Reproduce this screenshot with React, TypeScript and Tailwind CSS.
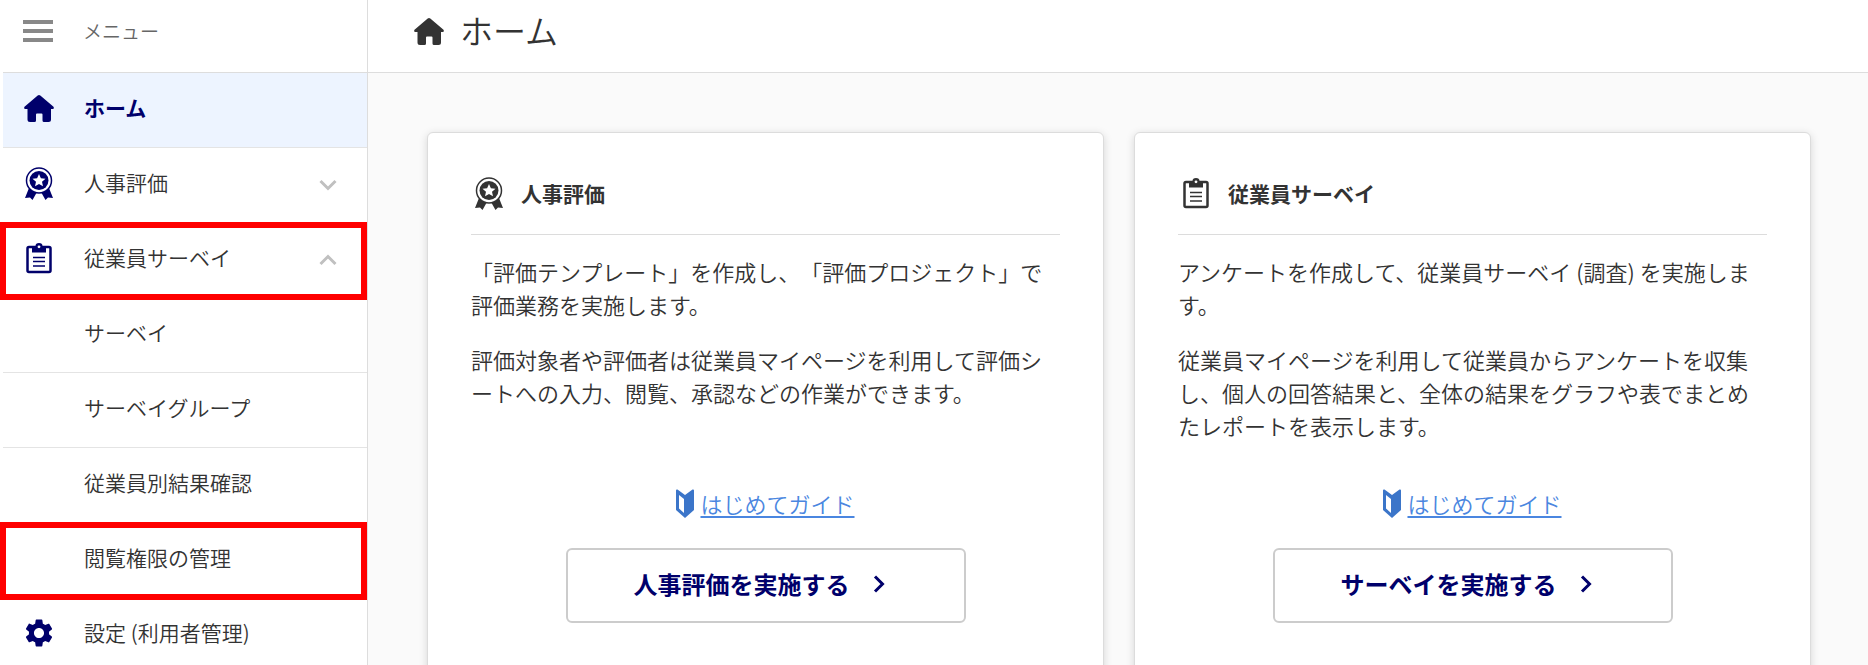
import { ReactNode } from "react";

type IconProps = { className?: string };

function HomeIcon({ className }: IconProps) {
    return (
        <svg viewBox="0 0 30 27" className={className} fill="currentColor" aria-hidden="true">
            <path d="M16.3 .6 L29.5 11.8 Q30.6 13.8 28.6 14 H27 V24.5 Q27 27 24.5 27 H20 Q18.5 27 18.5 25.5 V19.5 Q18.5 18.5 17.5 18.5 H13 Q12 18.5 12 19.5 V25.5 Q12 27 10.5 27 H6 Q3.5 27 3.5 24.5 V14 H1.4 Q-.6 13.8 .5 11.8 L13.7 .6 Q15 -.4 16.3 .6 Z" />
        </svg>
    );
}

function AwardIcon({ className }: IconProps) {
    return (
        <svg viewBox="0 0 28 33" className={className} fill="currentColor" aria-hidden="true">
            <path d="M4 21 L0 31 L5 30.5 L7.5 33 L12 25 Z M24 21 L28 31 L23 30.5 L20.5 33 L16 25 Z" />
            <circle cx="14" cy="13.5" r="12.5" fill="white" stroke="currentColor" strokeWidth="1.5" />
            <circle cx="14" cy="13.5" r="9.5" />
            <path
                d="M14 7 L15.9 11.2 L20.5 11.7 L17 14.7 L18 19.2 L14 16.9 L10 19.2 L11 14.7 L7.5 11.7 L12.1 11.2 Z"
                fill="white"
            />
        </svg>
    );
}

function ClipboardIcon({ className }: IconProps) {
    return (
        <svg viewBox="0 0 26 31" className={className} fill="none" stroke="currentColor" aria-hidden="true">
            <rect x="1.5" y="4" width="23" height="25" rx="1.5" strokeWidth="2.5" />
            <path d="M6 3 H9.5 A3.5 3 0 0 1 16.5 3 H20 V9.5 H6 Z" fill="currentColor" stroke="none" />
            <circle cx="13" cy="3.8" r="1.4" fill="white" stroke="none" />
            <path d="M7 14.5 H19 M7 18.5 H19 M7 23 H19" strokeWidth="1.5" />
        </svg>
    );
}

function GearIcon({ className }: IconProps) {
    return (
        <svg viewBox="2 2 20 20" className={className} fill="currentColor" aria-hidden="true">
            <path d="M19.14 12.94c.04-.3.06-.61.06-.94 0-.32-.02-.64-.07-.94l2.03-1.58c.18-.14.23-.41.12-.61l-1.92-3.32c-.12-.22-.37-.29-.59-.22l-2.39.96c-.5-.38-1.03-.7-1.62-.94L14.4 2.81c-.04-.24-.24-.41-.48-.41h-3.84c-.24 0-.43.17-.47.41L9.25 5.35c-.59.24-1.13.57-1.62.94l-2.39-.96c-.22-.08-.47 0-.59.22L2.74 8.87c-.12.21-.08.47.12.61l2.03 1.58c-.05.3-.09.63-.09.94s.02.64.07.94l-2.03 1.58c-.18.14-.23.41-.12.61l1.92 3.32c.12.22.37.29.59.22l2.39-.96c.5.38 1.03.7 1.62.94l.36 2.54c.05.24.24.41.48.41h3.84c.24 0 .44-.17.47-.41l.36-2.54c.59-.24 1.13-.56 1.62-.94l2.39.96c.22.08.47 0 .59-.22l1.92-3.32c.12-.22.07-.47-.12-.61l-2.01-1.58zM12 15.6c-1.98 0-3.6-1.62-3.6-3.6s1.62-3.6 3.6-3.6 3.6 1.62 3.6 3.6-1.62 3.6-3.6 3.6z" />
        </svg>
    );
}

function MenuIcon({ className }: IconProps) {
    return (
        <svg viewBox="0 0 30 22" className={className} fill="currentColor" aria-hidden="true">
            <path d="M0 0 H30 V4 H0 Z M0 9 H30 V13 H0 Z M0 18 H30 V22 H0 Z" />
        </svg>
    );
}

// Beginner mark next to the guide links
function BeginnerIcon({ className }: IconProps) {
    return (
        <svg viewBox="0 0 18 29" className={className} aria-hidden="true">
            <path d="M0 1.5 Q0 0 1.5 .5 L9 6 L16.5 .5 Q18 0 18 1.5 V21 L9 29 L0 21 Z" fill="#3b75c9" />
            <path d="M3 6 L8 10 V24 L3 19.5 Z" fill="white" />
        </svg>
    );
}

function Chevron({ className }: IconProps) {
    return (
        <svg viewBox="0 0 18 12" className={className} fill="none" stroke="currentColor" strokeWidth="3" aria-hidden="true">
            <path d="M1.5 2 L9 9.5 L16.5 2" />
        </svg>
    );
}

function NavItem({
    label,
    icon,
    active,
    arrow,
    marked,
}: {
    label: string;
    icon?: ReactNode;
    active?: boolean;
    arrow?: "up" | "down";
    marked?: boolean;
}) {
    return (
        <li className="relative">
            <a
                href="#"
                className={`ml-[3px] flex h-[75px] items-center border-b border-[#e4e4e4] pr-[30px] pb-1 pl-5 ${
                    active ? "bg-[#edf4ff] font-bold text-[#00006b]" : ""
                }`}
            >
                <span className="mr-[29px] flex w-8 justify-center text-[#00006b]">{icon}</span>
                <span className="flex-1">{label}</span>
                {arrow && (
                    <Chevron className={`mt-1 w-[18px] text-[#c0c0c0] ${arrow === "up" ? "rotate-180" : ""}`} />
                )}
            </a>
            {marked && (
                <div className="pointer-events-none absolute inset-x-0 -top-px -bottom-0.5 z-10 border-6 border-[#ff0000]" />
            )}
        </li>
    );
}

function Card({
    title,
    icon,
    paragraphs,
    action,
}: {
    title: string;
    icon: ReactNode;
    paragraphs: string[];
    action: string;
}) {
    return (
        <section className="flex flex-col rounded-md border border-[#dcdcdc] bg-white px-[43px] pt-9 pb-16 shadow-[0_2px_8px_rgba(0,0,0,0.15)]">
            <h2 className="flex h-[66px] items-center gap-[18px] border-b border-[#dcdcdc] pb-4 pl-1 text-[21px] font-bold">
                <span className="flex w-7 justify-center">{icon}</span>
                {title}
            </h2>
            <div className="flex min-h-[252px] flex-col gap-[22px] pt-5 text-[22px] leading-[33px] [line-break:loose]">
                {paragraphs.map((text) => (
                    <p key={text}>{text}</p>
                ))}
            </div>
            <div className="flex items-center justify-center gap-1.5 text-[22px] leading-[33px] text-[#4a86e0]">
                <BeginnerIcon className="w-[18px]" />
                <a href="#" className="underline underline-offset-3">
                    はじめてガイド
                </a>
            </div>
            <button className="mx-auto mt-7 flex h-[75px] w-[400px] max-w-full items-center justify-center gap-5 rounded-md border-2 border-[#cccccc] pr-2.5 pb-1 text-2xl font-bold text-[#00006b]">
                {action}
                <Chevron className="w-[18px] -rotate-90" />
            </button>
        </section>
    );
}

function App() {
    return (
        <div
            lang="ja"
            className="flex h-screen overflow-hidden bg-[#fafafa] font-['Noto_Sans_CJK_JP',sans-serif] font-[350] text-[#333333] [text-spacing-trim:space-all]"
        >
            {/* Sidebar */}
            <nav className="w-[368px] shrink-0 border-r border-[#dddddd] bg-white text-[21px]">
                <button className="ml-[3px] flex h-[73px] w-[364px] items-center gap-[30px] border-b border-[#dddddd] pb-2.5 pl-5 text-[19px] text-[#666666]">
                    <MenuIcon className="w-[30px] text-[#888888]" />
                    メニュー
                </button>
                <ul>
                    <NavItem label="ホーム" icon={<HomeIcon className="w-[30px]" />} active />
                    <NavItem label="人事評価" icon={<AwardIcon className="w-7" />} arrow="down" />
                    <NavItem label="従業員サーベイ" icon={<ClipboardIcon className="w-[26px]" />} arrow="up" marked />
                    <NavItem label="サーベイ" />
                    <NavItem label="サーベイグループ" />
                    <NavItem label="従業員別結果確認" />
                    <NavItem label="閲覧権限の管理" marked />
                    <NavItem label="設定 (利用者管理)" icon={<GearIcon className="w-7" />} />
                </ul>
            </nav>

            {/* Main content */}
            <main className="min-w-0 flex-1">
                <header className="flex h-[73px] items-center gap-4 border-b border-[#dddddd] bg-white pb-2.5 pl-[46px]">
                    <HomeIcon className="w-[30px]" />
                    <h1 className="text-[33px]">ホーム</h1>
                </header>
                <div className="grid grid-cols-2 gap-[30px] pt-[59px] pr-[57px] pl-[59px]">
                    <Card
                        title="人事評価"
                        icon={<AwardIcon className="w-7" />}
                        paragraphs={[
                            "「評価テンプレート」を作成し、「評価プロジェクト」で評価業務を実施します。",
                            "評価対象者や評価者は従業員マイページを利用して評価シートへの入力、閲覧、承認などの作業ができます。",
                        ]}
                        action="人事評価を実施する"
                    />
                    <Card
                        title="従業員サーベイ"
                        icon={<ClipboardIcon className="w-[26px]" />}
                        paragraphs={[
                            "アンケートを作成して、従業員サーベイ (調査) を実施します。",
                            "従業員マイページを利用して従業員からアンケートを収集し、個人の回答結果と、全体の結果をグラフや表でまとめたレポートを表示します。",
                        ]}
                        action="サーベイを実施する"
                    />
                </div>
            </main>
        </div>
    );
}

export default App;
